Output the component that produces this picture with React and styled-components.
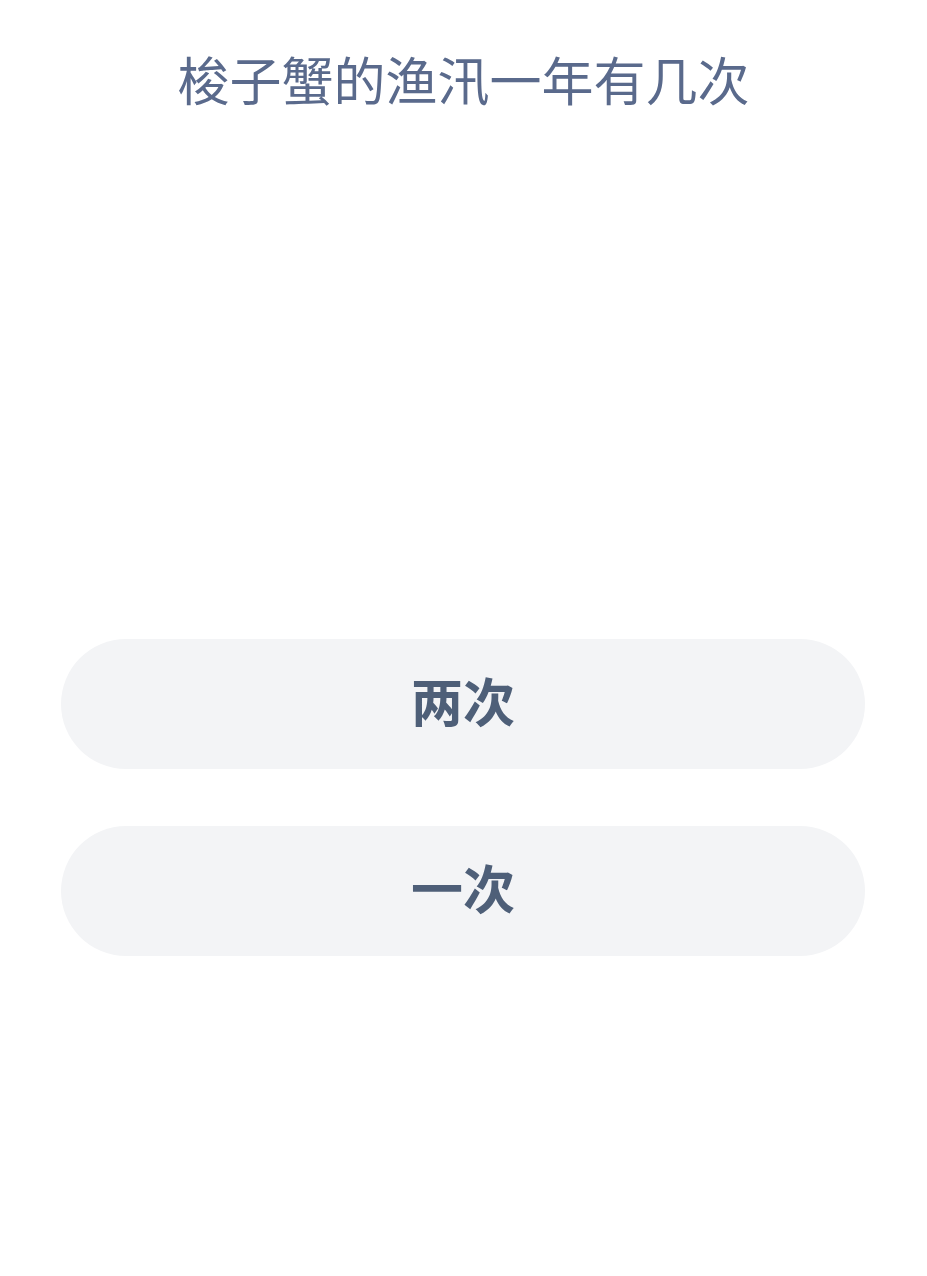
import React from 'react';
import styled, { createGlobalStyle } from 'styled-components';

const GlobalStyle = createGlobalStyle`
  body {
    margin: 0;
    background: #ffffff;
    font-family: "Noto Sans CJK SC", "Noto Sans", sans-serif;
  }
`;

const Page = styled.div`
  width: 927px;
  min-height: 1276px;
  display: flex;
  flex-direction: column;
  align-items: center;
`;

const Question = styled.h1`
  margin: 47px 0 0;
  font-size: 52px;
  line-height: 64px;
  font-weight: 400;
  color: #5a6a8c;
  text-align: center;
`;

const Options = styled.div`
  margin-top: 528px;
  width: 804px;
  margin-right: 1px;
  display: flex;
  flex-direction: column;
  gap: 57px;
`;

const Option = styled.button`
  height: 130px;
  padding: 0 0 10px;
  border: none;
  border-radius: 65px;
  background: #f3f4f6;
  color: #4e5f78;
  font-family: inherit;
  font-size: 52px;
  font-weight: 700;
  display: flex;
  align-items: center;
  justify-content: center;
  cursor: pointer;
`;

const answers = ['两次', '一次'];

export default function App() {
  return (
    <Page>
      <GlobalStyle />
      <Question>梭子蟹的渔汛一年有几次</Question>
      <Options>
        {answers.map((a) => (
          <Option key={a}>{a}</Option>
        ))}
      </Options>
    </Page>
  );
}
